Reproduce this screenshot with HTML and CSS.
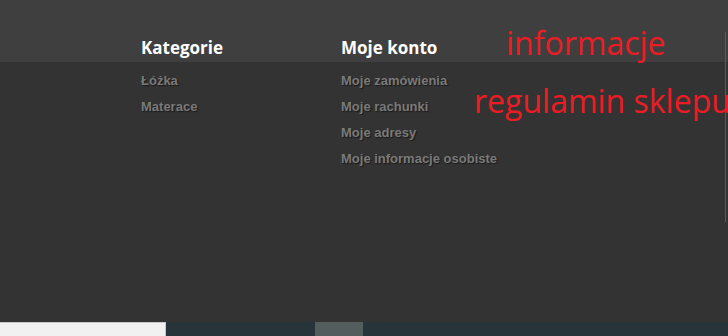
FILE: index.html
```html
<!DOCTYPE html>
<html lang="pl">
<head>
    <meta charset="UTF-8">
    <meta name="viewport" content="width=device-width, initial-scale=1.0">
    <title>Sklep</title>
    <link rel="stylesheet" href="styles.css">
</head>
<body>
    <footer class="footer">
        <div class="footer-inner">
            <div class="col">
                <h4 class="col-title">Kategorie</h4>
                <ul class="links">
                    <li><a href="#">Łóżka</a></li>
                    <li><a href="#">Materace</a></li>
                </ul>
            </div>
            <div class="col">
                <h4 class="col-title">Moje konto</h4>
                <ul class="links">
                    <li><a href="#">Moje zamówienia</a></li>
                    <li><a href="#">Moje rachunki</a></li>
                    <li><a href="#">Moje adresy</a></li>
                    <li><a href="#">Moje informacje osobiste</a></li>
                </ul>
            </div>
            <div class="col info">
                <a href="#" class="red-link first">informacje</a>
                <a href="#" class="red-link second">regulamin sklepu</a>
            </div>
        </div>
        <div class="edge"></div>
    </footer>
    <div class="bottom-strip">
        <div class="strip-light"></div>
        <div class="strip-dark">
            <div class="strip-block"></div>
        </div>
    </div>
</body>
</html>
```

FILE: styles.css
```css
*{
    margin: 0;
    padding: 0;
    box-sizing: border-box;
}
html, body{
    width: 728px;
    height: 336px;
    overflow: hidden;
    background: #333333;
}
.footer{
    position: relative;
    height: 322px;
    background: linear-gradient(#3f3f3f 0, #3f3f3f 62px, #333333 62px);
    overflow: hidden;
}
.footer-inner{
    display: flex;
    padding-left: 141px;
    padding-top: 35px;
}
.col{
    width: 200px;
    flex-shrink: 0;
}
.col-title{
    font-family: "Open Sans", sans-serif;
    font-weight: 700;
    font-size: 17px;
    line-height: 26px;
    color: #ffffff;
    margin-bottom: 6px;
}
.links{
    list-style: none;
}
.links li{
    height: 26px;
    line-height: 26px;
}
.links a{
    font-family: "Liberation Sans", Arial, sans-serif;
    font-weight: 700;
    font-size: 13px;
    color: #7a7a7a;
    text-decoration: none;
    text-shadow: 1px 1px 1px #1a1a1a;
}
.info{
    width: auto;
    margin-left: -67px;
    display: flex;
    flex-direction: column;
    white-space: nowrap;
}
.red-link{
    font-family: "Open Sans", sans-serif;
    font-size: 32px;
    color: #ed1c24;
    text-decoration: none;
    line-height: 40px;
}
.red-link.first{
    margin-left: 32px;
    margin-top: -12px;
}
.red-link.second{
    margin-top: 18px;
}
.edge{
    position: absolute;
    right: 2px;
    top: 32px;
    width: 1px;
    height: 190px;
    background: #5a5a5a;
}
.bottom-strip{
    display: flex;
    height: 14px;
}
.strip-light{
    width: 166px;
    background: #f1f1f1;
    border-top: 1px solid #c8c8c8;
    border-right: 1px solid #c8c8c8;
}
.strip-dark{
    flex: 1;
    background: #27343a;
    padding-left: 149px;
}
.strip-block{
    width: 48px;
    height: 100%;
    background: #545d5d;
}
```
